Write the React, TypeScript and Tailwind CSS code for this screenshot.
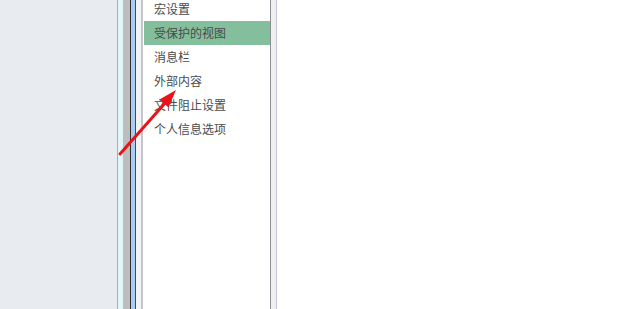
const items = ["宏设置", "受保护的视图", "消息栏", "外部内容", "文件阻止设置", "个人信息选项"];

export default function App() {
  return (
    <div
      className="relative flex w-[620px] h-[309px] overflow-hidden bg-white"
      style={{ fontFamily: '"Microsoft YaHei", "Noto Sans CJK SC", sans-serif' }}
    >
      {/* left pane */}
      <div className="w-[117px] h-full bg-[#e8ebef]" />
      {/* window frame stripes */}
      <div className="w-[1px] h-full bg-[#a9adb3]" />
      <div className="w-[5px] h-full bg-[#e4f5f7]" />
      <div className="w-[7px] h-full bg-[#bdbdbd]" />
      <div className="w-[1px] h-full bg-[#2f2f2f]" />
      <div className="w-[4px] h-full bg-[#a9cdf2]" />
      <div className="w-[1px] h-full bg-[#4a4a4a]" />
      <div className="w-[5px] h-full bg-[#f3f3f3]" />
      <div className="w-[2px] h-full bg-[#c4c4cc]" />
      {/* list panel */}
      <div className="w-[127px] h-full bg-white pl-[1px]">
        <div className="flex flex-col -mt-[3px]">
          {items.map((t, i) => (
            <div
              key={t}
              className={
                "h-[24px] flex items-center pl-[10px] text-[12px] text-[#4a4a4a] " +
                (i === 1 ? "bg-[#83bf9c]" : "")
              }
            >
              {t}
            </div>
          ))}
        </div>
      </div>
      <div className="w-[1px] h-full bg-[#8f9096]" />
      <div className="w-[5px] h-full bg-[#f0f0f0]" />
      <div className="w-[1px] h-full bg-[#c6c6d6]" />
      <div className="flex-1 h-full bg-white" />

      {/* red arrow */}
      <svg className="absolute left-0 top-0 pointer-events-none" width="620" height="309">
        <line x1="120" y1="154" x2="166" y2="102" stroke="#e8141a" strokeWidth="3" strokeLinecap="round" />
        <polygon points="176,90 159.5,99.5 168.5,107.5" fill="#e8141a" />
      </svg>
    </div>
  );
}
